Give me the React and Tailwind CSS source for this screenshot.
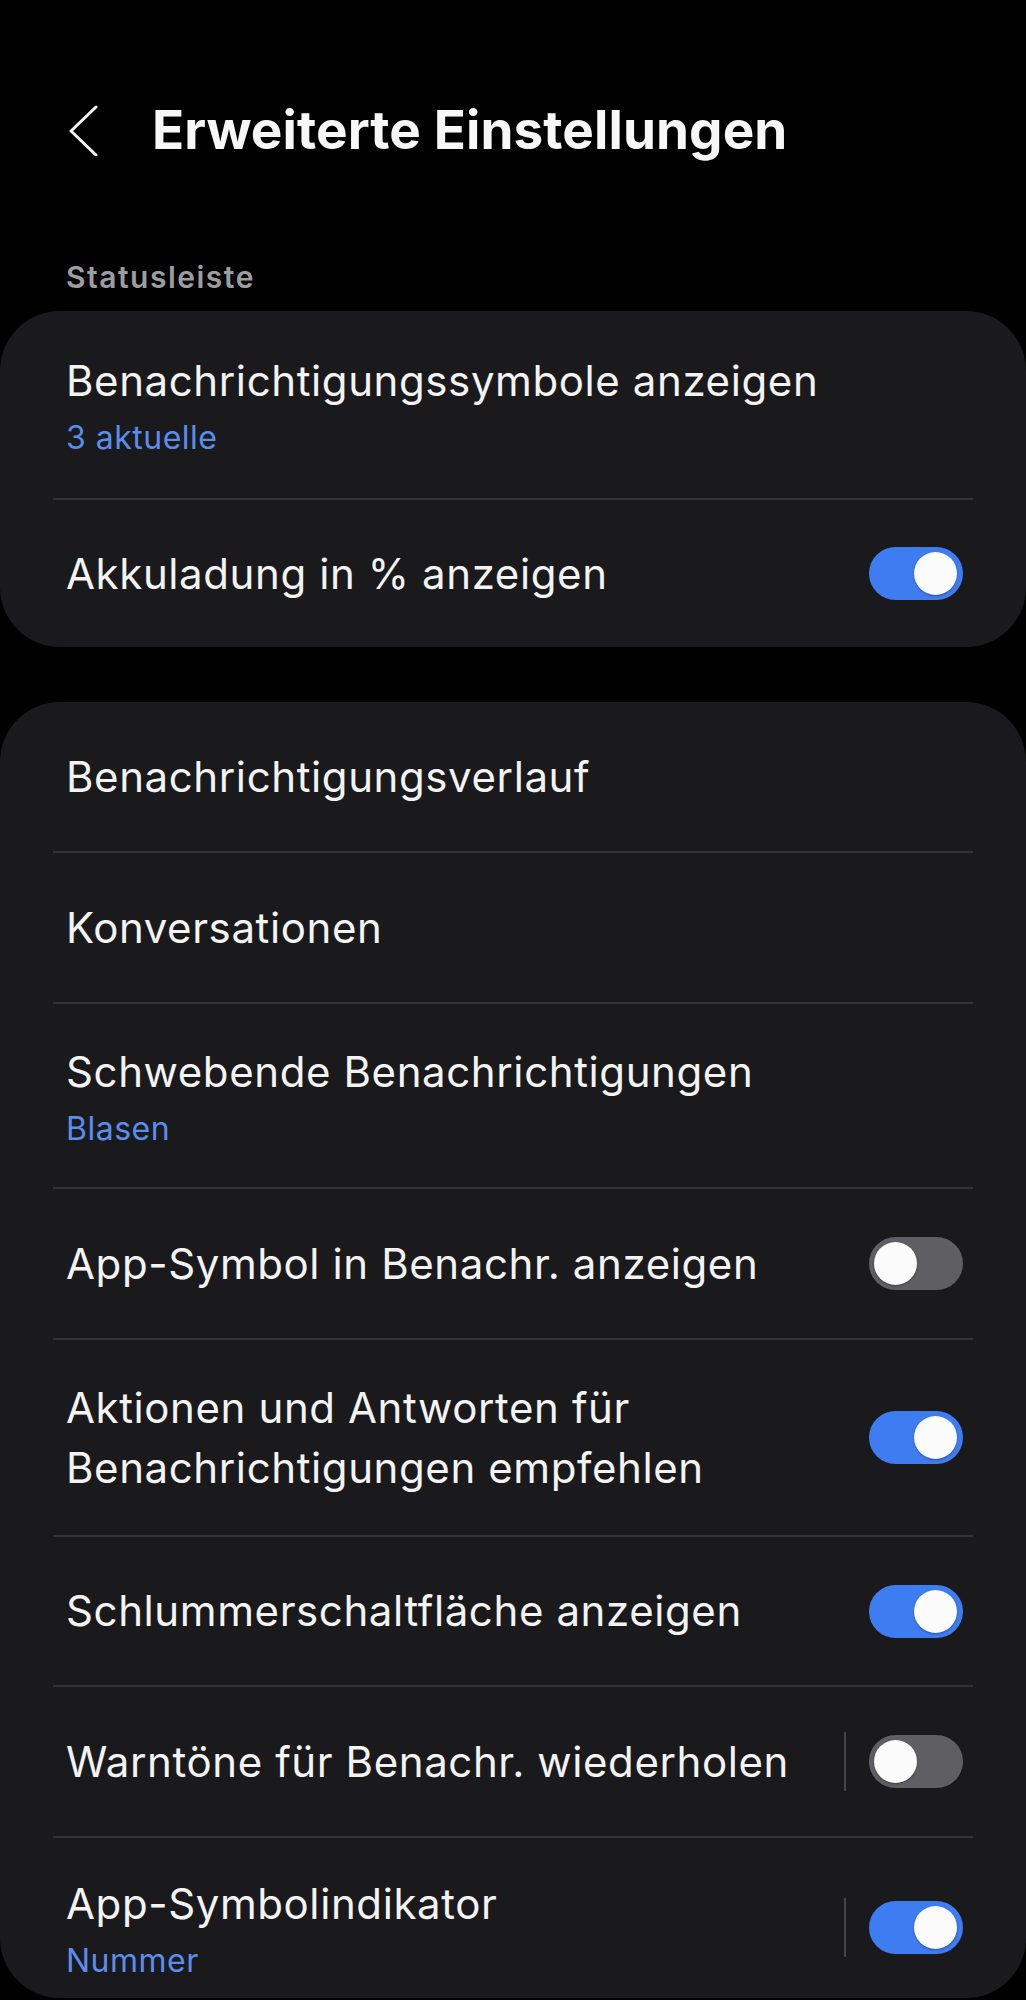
import React from "react";

const font = { fontFamily: '"Inter", "Noto Sans", sans-serif' };

function Toggle({ on }) {
  return (
    <div
      className={
        "relative h-[53px] w-[94px] shrink-0 rounded-full " +
        (on ? "bg-[#3d7cf1]" : "bg-[#5f5f63]")
      }
    >
      <div
        className={
          "absolute top-[5px] h-[43px] w-[43px] rounded-full bg-[#fbfbfb] shadow-[0_1px_2px_rgba(0,0,0,0.35)] " +
          (on ? "right-[6px]" : "left-[5px]")
        }
      />
    </div>
  );
}

function Divider() {
  return <div className="mx-[53px] h-[2px] bg-[#333335]" />;
}

function Row({ title, sub, toggle, sep, h, extra = "" }) {
  return (
    <div className={"flex items-center pl-[66px] pr-[63px] " + h + " " + extra}>
      <div className="flex min-w-0 flex-1 flex-col">
        <div className="text-[42px] leading-[60px] tracking-[0.6px] text-[#f3f3f3] whitespace-nowrap">{title}</div>
        {sub && (
          <div className="mt-[7px] text-[32px] leading-[40px] tracking-[0.5px] text-[#5b8ded]">{sub}</div>
        )}
      </div>
      {sep && <div className="mr-[23px] h-[59px] w-[2px] bg-[#454547]" />}
      {toggle !== undefined && <Toggle on={toggle} />}
    </div>
  );
}

export default function App() {
  return (
    <div className="min-h-[2000px] w-[1026px] bg-black" style={font}>
      <div className="flex h-[162px] items-end">
        <div className="flex h-[64px] items-center">
          <svg
            className="ml-[68px] mr-[52px]"
            width="32"
            height="52"
            viewBox="0 0 32 52"
            fill="none"
          >
            <polyline
              points="28,3 3,27 28,51"
              stroke="#f5f5f5"
              strokeWidth="3"
              strokeLinecap="round"
              strokeLinejoin="round"
            />
          </svg>
          <div className="text-[53px] font-bold leading-[64px] tracking-[0.1px] text-[#f7f7f7]">
            Erweiterte Einstellungen
          </div>
        </div>
      </div>
      <div className="ml-[66px] mt-[97px] text-[30px] font-semibold leading-[36px] tracking-[1.5px] text-[#9d9d9f]">
        Statusleiste
      </div>
      <div className="mt-[16px] rounded-[60px] bg-[#1a1a1c]">
        <Row h="h-[187px]" title="Benachrichtigungssymbole anzeigen" sub="3 aktuelle" />
        <Divider />
        <Row h="h-[147px]" title="Akkuladung in % anzeigen" toggle={true} />
      </div>
      <div className="mt-[55px] rounded-[60px] bg-[#1a1a1c]">
        <Row h="h-[149px]" title="Benachrichtigungsverlauf" />
        <Divider />
        <Row h="h-[149px]" title="Konversationen" />
        <Divider />
        <Row h="h-[183px]" title="Schwebende Benachrichtigungen" sub="Blasen" />
        <Divider />
        <Row h="h-[149px]" title="App-Symbol in Benachr. anzeigen" toggle={false} />
        <Divider />
        <Row
          h="h-[195px]"
          title={
            <>
              Aktionen und Antworten für
              <br />
              Benachrichtigungen empfehlen
            </>
          }
          toggle={true}
        />
        <Divider />
        <Row h="h-[148px]" title="Schlummerschaltfläche anzeigen" toggle={true} />
        <Divider />
        <Row h="h-[149px]" title="Warntöne für Benachr. wiederholen" toggle={false} sep />
        <Divider />
        <Row h="h-[160px]" extra="pt-[18px]" title="App-Symbolindikator" sub="Nummer" toggle={true} sep />
      </div>
    </div>
  );
}
